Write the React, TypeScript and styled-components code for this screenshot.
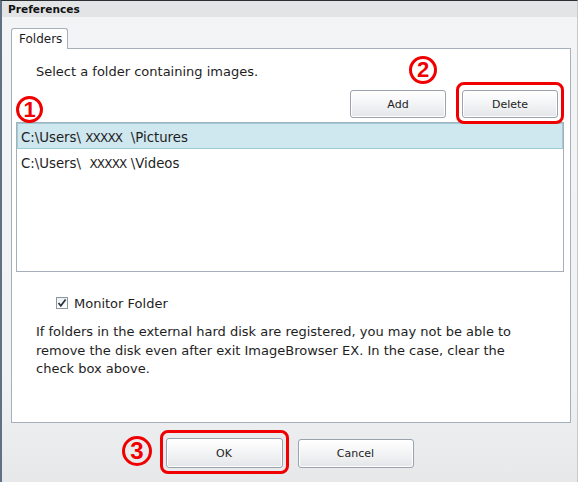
import React from 'react';
import styled, { createGlobalStyle } from 'styled-components';

const GlobalStyle = createGlobalStyle`
  html, body {
    margin: 0;
    padding: 0;
    background: #ffffff;
  }
  body {
    font-family: "DejaVu Sans", Verdana, sans-serif;
    color: #1e1e1e;
  }
`;

const Window = styled.div`
  width: 578px;
  height: 482px;
  box-sizing: border-box;
  display: flex;
  flex-direction: column;
  border-top: 1px solid #2b2f33;
  border-left: 2px solid #5f7182;
  border-right: 1px solid #c5cad0;
  background: linear-gradient(#f3f4f5, #f0f1f2 80%, #e6e8ea);
`;

const TitleBar = styled.div`
  height: 16px;
  line-height: 16px;
  padding-left: 6px;
  background: #e2e4e6;
  font-size: 10.6px;
  font-weight: bold;
  color: #111;
`;

const Body = styled.div`
  display: flex;
  flex-direction: column;
  padding: 11px 6px 0 9px;
`;

const Tabs = styled.div`
  display: flex;
`;

const Tab = styled.div`
  position: relative;
  z-index: 1;
  width: 57px;
  height: 21px;
  box-sizing: border-box;
  margin-bottom: -1px;
  padding-left: 7px;
  line-height: 21px;
  font-size: 12px;
  background: #ffffff;
  border: 1px solid #a6b0ba;
  border-bottom: none;
  border-radius: 3px 3px 0 0;
`;

const Panel = styled.div`
  position: relative;
  height: 375px;
  box-sizing: border-box;
  display: flex;
  flex-direction: column;
  padding: 0 6px 0 4px;
  background: #ffffff;
  border: 1px solid #a6b0ba;
`;

const Prompt = styled.div`
  margin: 15px 0 0 20px;
  line-height: 16px;
  font-size: 13px;
`;

const ButtonRow = styled.div`
  display: flex;
  justify-content: flex-end;
  gap: 16px;
  margin: 10px 0 4px;
  padding-right: 6px;
`;

const Button = styled.button<{ $w: number; $h: number }>`
  width: ${(p) => p.$w}px;
  height: ${(p) => p.$h}px;
  box-sizing: border-box;
  font-family: "DejaVu Sans", Verdana, sans-serif;
  font-size: 11px;
  color: #1e1e1e;
  background: linear-gradient(#ffffff, #f4f5f6 45%, #e3e6e9);
  border: 1px solid #9aa3ad;
  border-radius: 3px;
  box-shadow: inset 0 0 0 1px #ffffff;
  padding: 0;
`;

const Highlight = styled.span`
  position: relative;
  display: inline-flex;
  &::after {
    content: '';
    position: absolute;
    inset: -8px -6px -6px -6px;
    border: 3px solid #f00000;
    border-radius: 8px;
    pointer-events: none;
  }
`;

const List = styled.div`
  height: 150px;
  box-sizing: border-box;
  border: 1px solid #a6b0ba;
  display: flex;
  flex-direction: column;
`;

const Row = styled.div<{ $selected?: boolean }>`
  height: 26px;
  box-sizing: border-box;
  padding: 3px 0 0 3px;
  line-height: 21px;
  font-size: 13.3px;
  white-space: pre;
  border: 1px solid ${(p) => (p.$selected ? '#9fcbd8' : 'transparent')};
  background: ${(p) => (p.$selected ? '#cfe7ef' : 'transparent')};
`;

const Mask = styled.span`
  font-size: 12px;
  letter-spacing: -0.8px;
`;

const CheckRow = styled.label`
  display: flex;
  align-items: center;
  gap: 6px;
  margin: 23px 0 0 40px;
  height: 16px;
  font-size: 13px;
`;

const CheckBox = styled.span`
  width: 12px;
  height: 12px;
  box-sizing: border-box;
  border: 1px solid #8a96a2;
  background: linear-gradient(#eef0f2, #ffffff);
  display: flex;
  align-items: center;
  justify-content: center;
`;

const Note = styled.p`
  margin: 12px 0 0 20px;
  font-size: 13px;
  line-height: 18.5px;
`;

const Footer = styled.div`
  position: relative;
  flex: 1;
  display: flex;
  align-items: center;
  justify-content: center;
  gap: 15px;
  padding-top: 1px;
`;

const Badge = styled.span<{ $x: number; $y: number; $size: number }>`
  position: absolute;
  left: ${(p) => p.$x}px;
  top: ${(p) => p.$y}px;
  width: ${(p) => p.$size}px;
  height: ${(p) => p.$size}px;
  box-sizing: border-box;
  border: 3px solid #f00000;
  border-radius: 50%;
  display: flex;
  align-items: center;
  justify-content: center;
  color: #f00000;
  font-family: "Liberation Sans", Arial, sans-serif;
  font-weight: bold;
  font-size: ${(p) => Math.round(p.$size * 0.8)}px;
  line-height: 1;
`;

export default function App() {
  return (
    <>
      <GlobalStyle />
      <Window>
        <TitleBar>Preferences</TitleBar>
        <Body>
          <Tabs>
            <Tab>Folders</Tab>
          </Tabs>
          <Panel>
            <Prompt>Select a folder containing images.</Prompt>
            <ButtonRow>
              <Button $w={96} $h={28}>Add</Button>
              <Highlight>
                <Button $w={96} $h={28}>Delete</Button>
              </Highlight>
            </ButtonRow>
            <List>
              <Row $selected>
                C:\Users\ <Mask>XXXXX</Mask>  \Pictures
              </Row>
              <Row>
                C:\Users\  <Mask>XXXXX</Mask> \Videos
              </Row>
            </List>
            <CheckRow>
              <CheckBox>
                <svg width="10" height="10" viewBox="0 0 10 10">
                  <path d="M1.5 5 L3.8 7.8 L8.6 1.4" fill="none" stroke="#2a3440" strokeWidth="1.7" />
                </svg>
              </CheckBox>
              Monitor Folder
            </CheckRow>
            <Note>
              If folders in the external hard disk are registered, you may not be able to
              <br />
              remove the disk even after exit ImageBrowser EX. In the case, clear the
              <br />
              check box above.
            </Note>
            <Badge $x={4} $y={47} $size={27}>1</Badge>
            <Badge $x={397} $y={7} $size={28}>2</Badge>
          </Panel>
        </Body>
        <Footer>
          <Highlight>
            <Button $w={117} $h={30}>OK</Button>
          </Highlight>
          <Button $w={116} $h={29}>Cancel</Button>
          <Badge $x={120} $y={13} $size={30}>3</Badge>
        </Footer>
      </Window>
    </>
  );
}
